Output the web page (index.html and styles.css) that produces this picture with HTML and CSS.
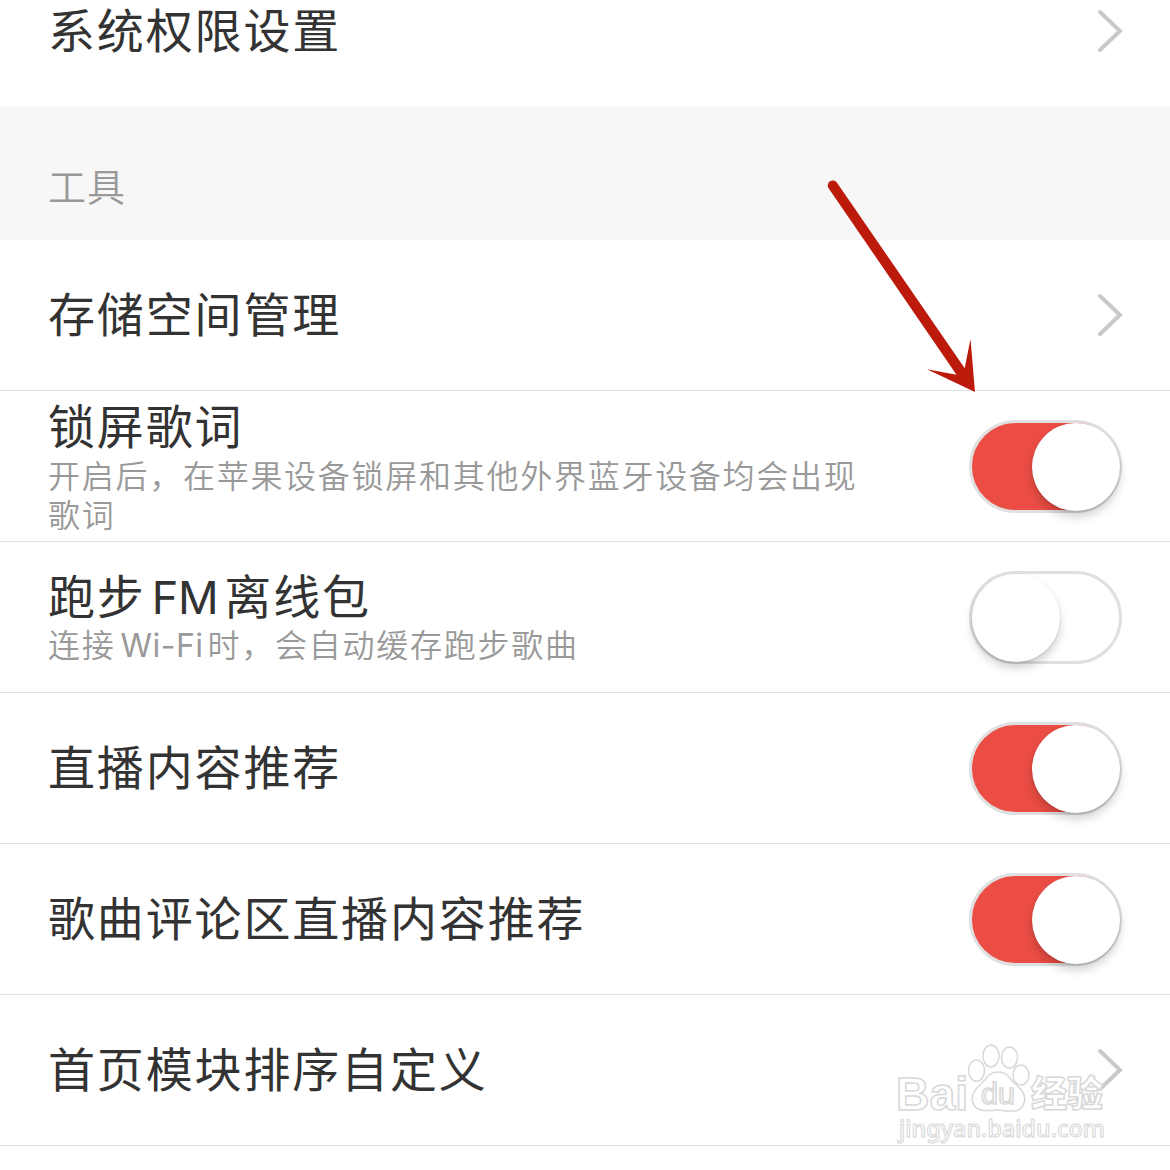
FILE: index.html
```html
<!DOCTYPE html>
<html lang="zh-CN">
<head>
<meta charset="utf-8">
<title>设置</title>
<link rel="stylesheet" href="styles.css">
</head>
<body>
<main class="settings">
  <div class="row row-first">
    <div class="title">系统权限设置</div>
    <svg class="chevron" viewBox="0 0 28 46"><path d="M4 4 24 23 4 42"/></svg>
  </div>
  <h2 class="section">工具</h2>
  <div class="row">
    <div class="title">存储空间管理</div>
    <svg class="chevron" viewBox="0 0 28 46"><path d="M4 4 24 23 4 42"/></svg>
  </div>
  <div class="row">
    <div class="text">
      <div class="title">锁屏歌词</div>
      <div class="desc">开启后，在苹果设备锁屏和其他外界蓝牙设备均会出现<br>歌词</div>
    </div>
    <div class="toggle on"><span class="thumb"></span></div>
  </div>
  <div class="row">
    <div class="text">
      <div class="title">跑步<span class="latin-title">FM</span>离线包</div>
      <div class="desc desc-single">连接<span class="latin-desc">Wi-Fi</span>时，会自动缓存跑步歌曲</div>
    </div>
    <div class="toggle"><span class="thumb"></span></div>
  </div>
  <div class="row">
    <div class="title">直播内容推荐</div>
    <div class="toggle on"><span class="thumb"></span></div>
  </div>
  <div class="row">
    <div class="title">歌曲评论区直播内容推荐</div>
    <div class="toggle on"><span class="thumb"></span></div>
  </div>
  <div class="row">
    <div class="title">首页模块排序自定义</div>
    <svg class="chevron" viewBox="0 0 28 46"><path d="M4 4 24 23 4 42"/></svg>
  </div>

  <svg class="arrow" viewBox="0 0 170 235">
    <path d="M27 22.700 L154.700 208.300 L160.500 179 L165 232 L117 209.200 L146.500 214.700 L18.600 28.200 A5 5 0 0 1 27 22.700Z"/>
  </svg>

  <svg class="watermark" viewBox="0 0 220 110">
    <g class="outline">
      <ellipse cx="86.500" cy="30.500" rx="8" ry="10.500"/>
      <ellipse cx="101" cy="16" rx="8" ry="11"/>
      <ellipse cx="119.500" cy="17.500" rx="8" ry="10.500"/>
      <ellipse cx="131" cy="35" rx="8" ry="10"/>
      <path d="M108 32C99 32 97 38 92 43C86 48 80 55 83 63C86 72 96 71 108 70C119 71 131 74 134 63C137 54 130 48 124 43C119 38 118 32 108 32Z"/>
      <text class="brand" x="6" y="69.500" textLength="72" lengthAdjust="spacingAndGlyphs">Bai</text>
      <text class="du" x="91" y="64" textLength="34" lengthAdjust="spacingAndGlyphs">du</text>
      <text class="brand-cn" x="141" y="67" textLength="72" lengthAdjust="spacingAndGlyphs">经验</text>
      <text class="url" x="9" y="97" textLength="206" lengthAdjust="spacingAndGlyphs">jingyan.baidu.com</text>
    </g>
  </svg>
</main>
</body>
</html>
```
FILE: styles.css
```css
* { box-sizing: border-box; }

body {
  margin: 0;
  background: #fff;
  color: #333;
  font-family: Inter, "Noto Sans CJK SC", sans-serif;
}

.settings {
  position: relative;
  width: 1170px;
  height: 1170px;
  overflow: hidden;
}

.row {
  display: flex;
  align-items: center;
  justify-content: space-between;
  height: 151px;
  padding: 0 46px 0 48px;
  border-bottom: 1px solid #e2e2e2;
}

.row-first {
  height: 106px;
  padding-bottom: 44px;
  border-bottom: 0;
}

.section {
  height: 134px;
  margin: 0;
  padding: 53px 48px 0;
  background: #f7f7f7;
  color: #999;
  font-size: 38px;
  font-weight: 350;
  line-height: 56px;
  letter-spacing: 1px;
}

.title {
  font-size: 47px;
  line-height: 60px;
  letter-spacing: 1.85px;
  white-space: nowrap;
}

.desc {
  color: #999;
  font-size: 32px;
  font-weight: 350;
  line-height: 39px;
  letter-spacing: 1.73px;
  white-space: nowrap;
}

.desc-single {
  margin-top: -2px;
  margin-bottom: 2px;
}

.latin-title {
  margin: 0 6px 0 6px;
  font-size: 45px;
  font-weight: 400;
  letter-spacing: -.3px;
}

.latin-desc {
  margin: 0 4px 0 5px;
  font-weight: 400;
  letter-spacing: .5px;
}

.chevron {
  width: 28px;
  height: 46px;
  fill: none;
  stroke: #c9c9c9;
  stroke-width: 4;
  stroke-linecap: round;
  stroke-linejoin: miter;
}

.toggle {
  flex: none;
  width: 153px;
  height: 93px;
  margin-right: 2px;
  border: 3px solid #e1e0e0;
  border-radius: 47px;
  background: #fff;
}

.toggle.on { background: #eb4d44; }

.thumb {
  display: block;
  width: 88px;
  height: 88px;
  border-radius: 50%;
  background: #fff;
  box-shadow: 0 6px 10px rgba(0, 0, 0, .18), 0 1px 2px rgba(0, 0, 0, .12);
}

.on .thumb { margin-left: 60px; }

.arrow {
  position: absolute;
  left: 810px;
  top: 160px;
  width: 170px;
  height: 235px;
  fill: #bc1a0b;
}

.watermark {
  position: absolute;
  left: 890px;
  top: 1040px;
  width: 220px;
  height: 110px;
}

.outline {
  fill: rgba(255, 255, 255, .85);
  stroke: #d8d8d8;
  stroke-width: 1.5;
}

.brand { font-family: "Liberation Sans", Arial, sans-serif; font-size: 46px; font-weight: 700; }
.du { font-family: "Liberation Sans", Arial, sans-serif; font-size: 29px; }
.brand-cn { font-family: "Noto Sans CJK SC", sans-serif; font-size: 36px; font-weight: 900; }
.url { font-family: "Noto Sans", sans-serif; font-size: 24px; font-weight: 500; stroke-width: 1.1; }
```
